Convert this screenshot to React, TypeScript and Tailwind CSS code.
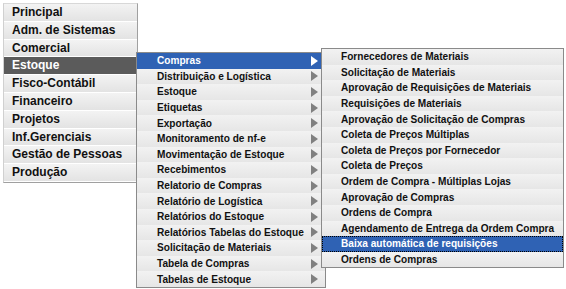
import { useState } from "react";

const mainItems = [
  "Principal",
  "Adm. de Sistemas",
  "Comercial",
  "Estoque",
  "Fisco-Contábil",
  "Financeiro",
  "Projetos",
  "Inf.Gerenciais",
  "Gestão de Pessoas",
  "Produção",
];

const estoqueItems = [
  "Compras",
  "Distribuição e Logística",
  "Estoque",
  "Etiquetas",
  "Exportação",
  "Monitoramento de nf-e",
  "Movimentação de Estoque",
  "Recebimentos",
  "Relatorio de Compras",
  "Relatório de Logística",
  "Relatórios do Estoque",
  "Relatórios Tabelas do Estoque",
  "Solicitação de Materiais",
  "Tabela de Compras",
  "Tabelas de Estoque",
];

const comprasItems = [
  "Fornecedores de Materiais",
  "Solicitação de Materiais",
  "Aprovação de Requisições de Materiais",
  "Requisições de Materiais",
  "Aprovação de Solicitação de Compras",
  "Coleta de Preços Múltiplas",
  "Coleta de Preços por Fornecedor",
  "Coleta de Preços",
  "Ordem de Compra - Múltiplas Lojas",
  "Aprovação de Compras",
  "Ordens de Compra",
  "Agendamento de Entrega da Ordem Compra",
  "Baixa automática de requisições",
  "Ordens de Compras",
];

const Arrow = ({ white }: { white?: boolean }) => (
  <svg width="7" height="10" viewBox="0 0 7 10" className="shrink-0">
    <polygon points="0,0 7,5 0,10" fill={white ? "#ffffff" : "#808080"} />
  </svg>
);

export default function App() {
  const [active] = useState("Estoque");

  return (
    <div className="relative w-[566px] h-[289px] bg-white overflow-hidden font-['Liberation_Sans',Arial,sans-serif] font-bold">
      {/* menu principal */}
      <div className="absolute left-[3px] top-[3px] w-[135px] border border-[#a0a0a0] border-t-[#d8d8d8] border-l-[#d0d0d0] bg-white">
        {mainItems.map((item) => (
          <div
            key={item}
            className={
              item === active
                ? "h-[17.8px] border-b border-white bg-[#5b5b5b] text-white text-[12px] leading-[17px] pl-[8px] whitespace-nowrap"
                : "h-[17.8px] border-b border-white bg-linear-to-b from-[#f3f3f3] to-[#e3e3e3] text-[#111] text-[12px] leading-[17px] pl-[8px] whitespace-nowrap"
            }
          >
            {item}
          </div>
        ))}
      </div>

      {/* submenu estoque */}
      <div className="absolute left-[136px] top-[52px] w-[190px] border border-[#8a8a8a] bg-[#ececec]">
        {estoqueItems.map((item, i) => (
          <div
            key={item}
            className={
              i === 0
                ? "h-[15.6px] flex items-center justify-between pl-[20px] pr-[7px] bg-[#2f62b4] text-white text-[10.1px] whitespace-nowrap"
                : "h-[15.6px] flex items-center justify-between pl-[20px] pr-[7px] bg-linear-to-b from-[#f2f2f2] to-[#e6e6e6] text-[#111] text-[10.1px] whitespace-nowrap"
            }
          >
            <span>{item}</span>
            <Arrow white={i === 0} />
          </div>
        ))}
      </div>

      {/* submenu compras */}
      <div className="absolute left-[321px] top-[48px] w-[243px] border border-[#8a8a8a] bg-[#ececec]">
        {comprasItems.map((item) => (
          <div
            key={item}
            className={
              item === "Baixa automática de requisições"
                ? "h-[15.6px] flex items-center pl-[19px] bg-[#2f62b4] text-white text-[10.1px] whitespace-nowrap outline-1 outline-dotted outline-offset-[-1px] outline-black"
                : "h-[15.6px] flex items-center pl-[19px] bg-linear-to-b from-[#f2f2f2] to-[#e6e6e6] text-[#111] text-[10.1px] whitespace-nowrap"
            }
          >
            {item}
          </div>
        ))}
      </div>
    </div>
  );
}
